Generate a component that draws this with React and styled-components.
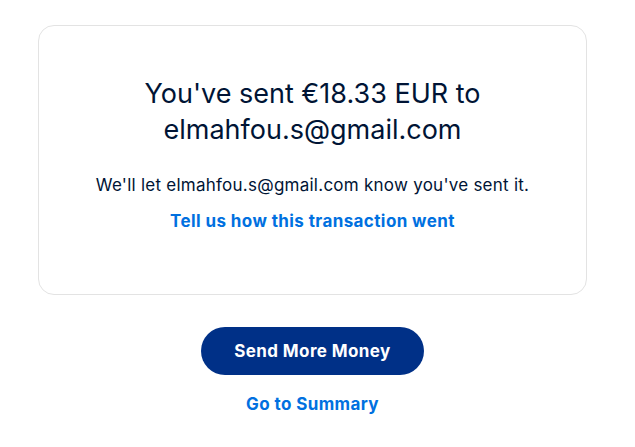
import React from 'react';
import styled, { createGlobalStyle } from 'styled-components';

const GlobalStyle = createGlobalStyle`
  body {
    margin: 0;
    background: #ffffff;
    font-family: Inter, "Liberation Sans", Arial, sans-serif;
  }
`;

const Page = styled.main`
  width: 625px;
  padding-top: 25px;
  display: flex;
  flex-direction: column;
  align-items: center;
`;

const Card = styled.section`
  box-sizing: border-box;
  width: 549px;
  height: 270px;
  border: 1px solid #e3e3e3;
  border-radius: 16px;
  padding-top: 50px;
  display: flex;
  flex-direction: column;
  align-items: center;
  text-align: center;
`;

const Heading = styled.h1`
  margin: 0;
  font-size: 27px;
  font-weight: 400;
  line-height: 36px;
  color: #001435;
`;

const Note = styled.p`
  margin: 25px 0 0;
  font-size: 17px;
  line-height: 24px;
  letter-spacing: 0.25px;
  color: #001435;
`;

const TextLink = styled.a`
  display: block;
  margin-top: ${p => p.$top || 0}px;
  font-size: 17px;
  font-weight: 700;
  line-height: 24px;
  letter-spacing: 0.4px;
  color: #0070e0;
  text-decoration: none;
  cursor: pointer;
`;

const PrimaryButton = styled.button`
  margin-top: 32px;
  width: 223px;
  height: 48px;
  border: none;
  border-radius: 24px;
  background: #003087;
  color: #ffffff;
  font-family: inherit;
  font-size: 17px;
  font-weight: 700;
  letter-spacing: 0.4px;
  cursor: pointer;
`;

export default function App() {
  return (
    <>
      <GlobalStyle />
      <Page>
        <Card>
          <Heading>
            You've sent €18.33 EUR to
            <br />
            elmahfou.s@gmail.com
          </Heading>
          <Note>We'll let elmahfou.s@gmail.com know you've sent it.</Note>
          <TextLink $top={12}>Tell us how this transaction went</TextLink>
        </Card>
        <PrimaryButton>Send More Money</PrimaryButton>
        <TextLink $top={17}>Go to Summary</TextLink>
      </Page>
    </>
  );
}
